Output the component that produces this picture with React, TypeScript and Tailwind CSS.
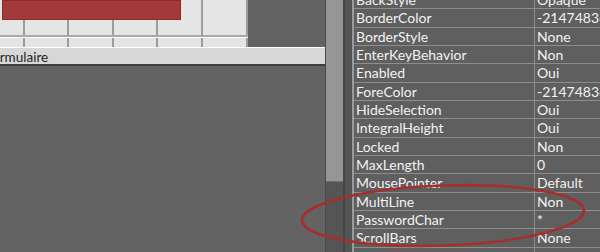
const props: [string, string][] = [
  ["BackStyle", "Opaque"],
  ["BorderColor", "-2147483643"],
  ["BorderStyle", "None"],
  ["EnterKeyBehavior", "Non"],
  ["Enabled", "Oui"],
  ["ForeColor", "-2147483640"],
  ["HideSelection", "Oui"],
  ["IntegralHeight", "Oui"],
  ["Locked", "Non"],
  ["MaxLength", "0"],
  ["MousePointer", "Default"],
  ["MultiLine", "Non"],
  ["PasswordChar", "*"],
  ["ScrollBars", "None"],
  ["SpecialEffect", "Plat"],
];

// widths of the designer grid cells
const cells = [25, 44, 45, 44, 45, 45];

function FormDesigner() {
  return (
    <div className="relative h-[47px] w-[248px] overflow-hidden bg-[#e5e5e5]">
      <div className="flex h-[37px] border-b-2 border-[#a9a9a9]">
        {cells.map((w, i) => (
          <div
            key={i}
            className="h-full shrink-0 border-r-2 border-r-[#9c9c9c]"
            style={{ width: w }}
          />
        ))}
      </div>
      <div className="flex h-[10px] border-t border-white">
        {cells.map((w, i) => (
          <div
            key={i}
            className="h-full shrink-0 border-r-2 border-r-[#9c9c9c]"
            style={{ width: w }}
          />
        ))}
      </div>
      <div className="absolute left-[2px] top-0 h-[20px] w-[179px] border border-[#8e2a2a] bg-[#a33a3a]" />
    </div>
  );
}

function PropertyRow({ name, value }: { name: string; value: string }) {
  return (
    <div className="flex h-[18.33px] border-b border-[#8d8d8d] bg-[#5f5f5f] text-[14px] leading-[18px] text-[#f2f2f2]">
      <div className="w-[181px] shrink-0 border-r border-[#8d8d8d] pl-[2px]">{name}</div>
      <div className="whitespace-nowrap pl-[2px]">{value}</div>
    </div>
  );
}

export default function App() {
  return (
    <div
      className="relative flex h-[252px] w-[600px] overflow-hidden bg-[#636363]"
      style={{ fontFamily: 'Lato, "Noto Sans", sans-serif' }}
    >
      {/* left: form designer */}
      <div className="flex w-[325px] shrink-0 flex-col">
        <div className="flex">
          <FormDesigner />
          <div className="flex-1 bg-[#636363]" />
        </div>
        <div className="h-[19px] overflow-hidden border-t border-white border-b-2 border-b-[#3d3d3d] bg-[#d7d7d7] pt-[1px] text-[13.5px] leading-[16px] text-[#1e1e1e]">
          <span className="ml-[-15px] whitespace-nowrap">Formulaire</span>
        </div>
        <div className="flex-1 bg-[#636363]" />
      </div>

      {/* scrollbar */}
      <div className="flex w-[18px] shrink-0 flex-col border-l border-[#4a4a4a] bg-[#555555]">
        <div className="h-[182px] border-b border-[#6e6e6e] bg-[#969696]" />
      </div>
      <div className="w-[2px] shrink-0 bg-[#454545]" />
      <div className="w-[7px] shrink-0 bg-[#555555]" />

      {/* property sheet */}
      <div className="flex-1 overflow-hidden border-l-2 border-[#9a9a9a]">
        <div className="mt-[-9px]">
          {props.map(([n, v]) => (
            <PropertyRow key={n} name={n} value={v} />
          ))}
        </div>
      </div>

      <svg className="pointer-events-none absolute left-0 top-0" width="600" height="252">
        <ellipse
          cx="443"
          cy="215.5"
          rx="141"
          ry="30"
          fill="none"
          stroke="#a52e2e"
          strokeWidth="2.6"
          transform="rotate(-2 443 215.5)"
        />
      </svg>
    </div>
  );
}
